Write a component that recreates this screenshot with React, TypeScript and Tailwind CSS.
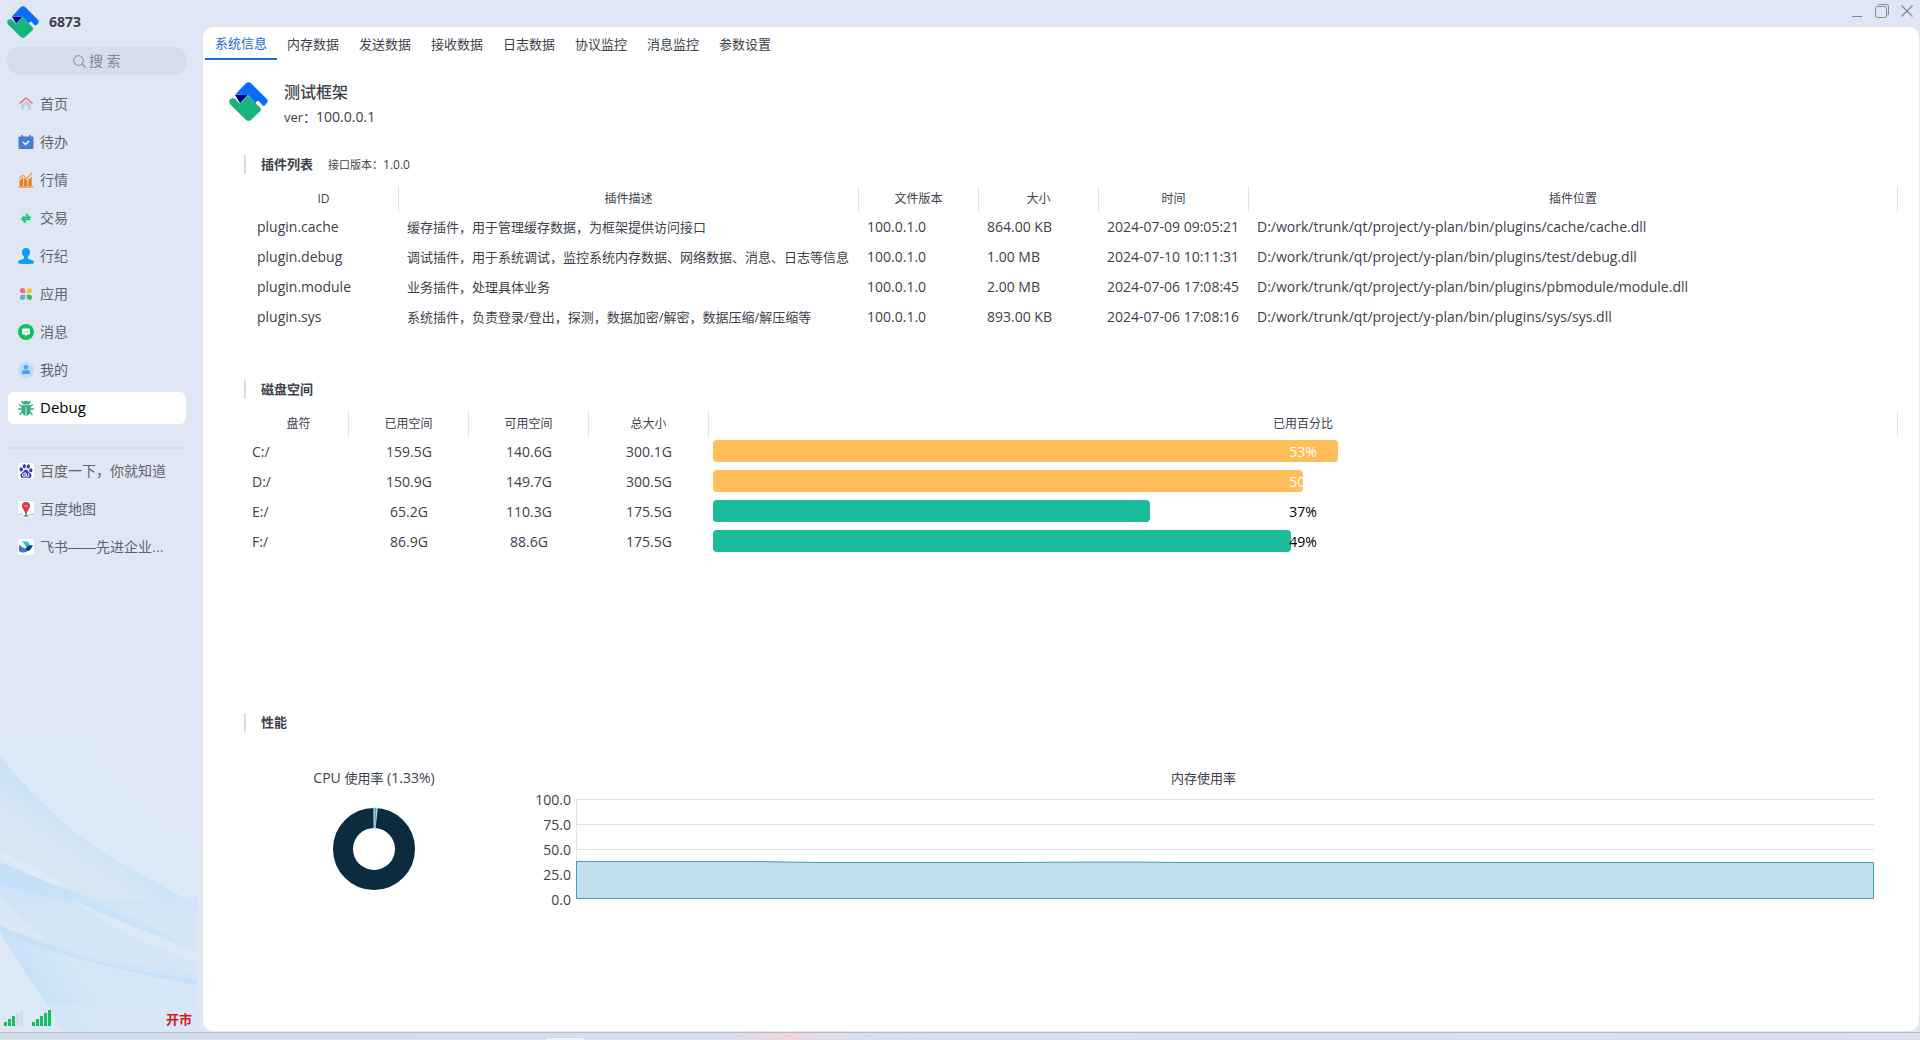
import { ReactNode, useState } from 'react';
import clsx from 'clsx';
import { SiBaidu } from 'react-icons/si';

interface Plugin {
  id: string;
  description: string;
  version: string;
  size: string;
  time: string;
  path: string;
}

interface Disk {
  name: string;
  used: string;
  free: string;
  total: string;
  percent: number;
}

const tabs = ['系统信息', '内存数据', '发送数据', '接收数据', '日志数据', '协议监控', '消息监控', '参数设置'];

const plugins: Plugin[] = [
  {
    id: 'plugin.cache',
    description: '缓存插件，用于管理缓存数据，为框架提供访问接口',
    version: '100.0.1.0',
    size: '864.00 KB',
    time: '2024-07-09 09:05:21',
    path: 'D:/work/trunk/qt/project/y-plan/bin/plugins/cache/cache.dll',
  },
  {
    id: 'plugin.debug',
    description: '调试插件，用于系统调试，监控系统内存数据、网络数据、消息、日志等信息',
    version: '100.0.1.0',
    size: '1.00 MB',
    time: '2024-07-10 10:11:31',
    path: 'D:/work/trunk/qt/project/y-plan/bin/plugins/test/debug.dll',
  },
  {
    id: 'plugin.module',
    description: '业务插件，处理具体业务',
    version: '100.0.1.0',
    size: '2.00 MB',
    time: '2024-07-06 17:08:45',
    path: 'D:/work/trunk/qt/project/y-plan/bin/plugins/pbmodule/module.dll',
  },
  {
    id: 'plugin.sys',
    description: '系统插件，负责登录/登出，探测，数据加密/解密，数据压缩/解压缩等',
    version: '100.0.1.0',
    size: '893.00 KB',
    time: '2024-07-06 17:08:16',
    path: 'D:/work/trunk/qt/project/y-plan/bin/plugins/sys/sys.dll',
  },
];

const disks: Disk[] = [
  { name: 'C:/', used: '159.5G', free: '140.6G', total: '300.1G', percent: 53 },
  { name: 'D:/', used: '150.9G', free: '149.7G', total: '300.5G', percent: 50 },
  { name: 'E:/', used: '65.2G', free: '110.3G', total: '175.5G', percent: 37 },
  { name: 'F:/', used: '86.9G', free: '88.6G', total: '175.5G', percent: 49 },
];

function Logo({ className }: { className: string }) {
  return (
    <svg viewBox="0 0 116 116" className={className} aria-hidden="true">
      <path
        d="M18 38 50 4q8-7 16 0l46 46q6 6 1 12l-4 6q-6 5-11 0L88 56q-8 0-8 8L56 39z"
        fill="#0b6cf8"
      />
      <path d="M18 39h38L33 63z" fill="#00008c" />
      <path
        d="M3 52q8-8 15-2l11 12q3 3 7 0l20-22 36 36q6 6 0 12L66 112q-8 7-16 0L4 67q-6-7-1-15z"
        fill="#17b47e"
      />
    </svg>
  );
}

function HomeIcon() {
  return (
    <svg viewBox="0 0 16 16" className="size-4">
      <path d="M3 8.500 8 4.500l5 4V14h-3v-3.500a2 2 0 0 0-4 0V14H3z" fill="#c3cfdc" />
      <path d="M1.500 7.500 8 2l6.500 5.500" fill="none" stroke="#e8636a" strokeWidth="1.300" />
    </svg>
  );
}

function TodoIcon() {
  return (
    <svg viewBox="0 0 16 16" className="size-4">
      <rect x=".5" y="2.500" width="15" height="12.500" rx="1" fill="#4a7bd0" />
      <path d="M4 1v3M12 1v3" stroke="#4a7bd0" strokeWidth="1.600" />
      <path d="m5 8 2.500 2.500L11 7" fill="none" stroke="#fff" strokeWidth="1.500" />
    </svg>
  );
}

function MarketIcon() {
  return (
    <svg viewBox="0 0 16 16" className="size-4">
      <path d="M1.500 8.500 5 5.500V14H1.500zM5.800 5.500 9.500 9v5H5.800zM10.300 8l3.400-3.500V14h-3.400z" fill="#f27a1a" />
      <path d="M1 6.500 5 3l4 3.500L14 1M.5 15h15" fill="none" stroke="#f59a4f" strokeWidth="1.300" />
    </svg>
  );
}

function TradeIcon() {
  return (
    <svg viewBox="0 0 16 16" className="size-4">
      <circle cx="8" cy="8" r="7" fill="#c5f1de" />
      <path d="M4 7.300h7.500L8 4M12 9.300H4.500L8 12.500" fill="none" stroke="#1fb784" strokeWidth="1.700" />
    </svg>
  );
}

function PersonIcon() {
  return (
    <svg viewBox="0 0 16 16" className="size-4">
      <path
        d="M8 0c2.600 0 4 1.800 4 4.300 0 1.900-.9 3.500-2 4.500v1.400c0 1.300 6 1.300 6 4.300 0 1-2 1.500-8 1.500s-8-.5-8-1.500c0-3 6-3 6-4.300V8.800C4.900 7.800 4 6.200 4 4.300 4 1.800 5.400 0 8 0z"
        fill="#0a9ff5"
      />
    </svg>
  );
}

function AppsIcon() {
  return (
    <svg viewBox="0 0 16 16" className="size-4">
      <path d="M4.500 2a2.700 2.700 0 0 1 2.700 2.700v2.500H4.500a2.600 2.600 0 0 1 0-5.200z" fill="#f0717a" />
      <path d="M11.500 2a2.600 2.600 0 0 1 0 5.200H8.800V4.700A2.700 2.700 0 0 1 11.500 2z" fill="#fbc531" />
      <path d="M4.500 8.800h2.700v2.700a2.600 2.600 0 1 1-2.700-2.700z" fill="#6ea4f8" />
      <path d="M8.800 8.800h2.700a2.600 2.600 0 1 1-2.700 2.700z" fill="#2ec45a" />
    </svg>
  );
}

function MessageIcon() {
  return (
    <svg viewBox="0 0 16 16" className="size-4">
      <circle cx="8" cy="8" r="8" fill="#0fc25b" />
      <path d="M5 4.500h6a1 1 0 0 1 1 1v4a1 1 0 0 1-1 1H9.500L8 12l-1.500-1.500H5a1 1 0 0 1-1-1v-4a1 1 0 0 1 1-1z" fill="#fff" />
      <path d="M6 7.800h4" stroke="#7ddba5" strokeWidth="1" />
    </svg>
  );
}

function MineIcon() {
  return (
    <svg viewBox="0 0 16 16" className="size-4">
      <circle cx="8" cy="8" r="8" fill="#bfdcfb" />
      <circle cx="8" cy="5.200" r="2.200" fill="#4f9ff5" />
      <path d="M4 12V9.800Q4 8.200 5.600 8.200h4.800Q12 8.200 12 9.800V12z" fill="#4f9ff5" />
    </svg>
  );
}

function BugIcon() {
  return (
    <svg viewBox="0 0 16 16" className="size-4">
      <path
        d="M5 3 3.500 1M11 3l1.500-2M4 6.500 1 4.500M12 6.500l3-2M4 9H0M12 9h4M4 12l-2.500 3M12 12l2.500 3"
        stroke="#2fae84"
        strokeWidth="1.300"
      />
      <path d="M4.500 4.500C4.500 2 6 .8 8 .8s3.500 1.200 3.500 3.700z" fill="#2fae84" />
      <path d="M3.500 5.300h9V10c0 3.500-2 5.500-4.500 5.500S3.500 13.500 3.500 10z" fill="#2fae84" />
      <path d="M8 7v8" stroke="#b9e6d6" strokeWidth="1.200" />
    </svg>
  );
}

function BaiduIcon() {
  return (
    <span className="flex size-4 items-center justify-center rounded-xs bg-white">
      <SiBaidu className="size-3.5 text-[#2f36c9]" />
    </span>
  );
}

function MapIcon() {
  return (
    <svg viewBox="0 0 16 16" className="size-4">
      <rect width="16" height="16" rx="2" fill="#fff" />
      <path d="M0 13l4-2 2 4H1q-1 0-1-1z" fill="#cfe6f3" />
      <path d="m16 12-5 1-1 2h5q1 0 1-1z" fill="#cfe9b5" />
      <path d="M5 15.500 8 13l3 2.500z" fill="#3f7fd0" />
      <path d="M8 1a4 4 0 0 1 4 4c0 2.500-2.500 4-3.300 8H7.300C6.500 9 4 7.500 4 5a4 4 0 0 1 4-4z" fill="#e0373f" />
      <path d="M6.500 5h3" stroke="#f6a5a8" strokeWidth="1.500" />
    </svg>
  );
}

function FeishuIcon() {
  return (
    <svg viewBox="0 0 16 16" className="size-4">
      <rect width="16" height="16" rx="2" fill="#fff" />
      <path d="M3.500 2.500h6c1.200 1.200 2 2.600 2.300 4.200L8.700 9C7.500 6.300 5.700 4.200 3.500 2.500z" fill="#1cc9b4" />
      <path d="M1 5.500c3 3 6.500 4.800 10 4.500C9.500 13 7 13.700 4.500 13.500 2.500 13.300 1 12.500 1 11.500z" fill="#3673f0" />
      <path d="M7.500 9.500C9.500 6.500 12 5.500 15 6.500c-1.500 1.500-1.800 4.500-5 5.500-1 .3-2-1-2.500-2.500z" fill="#123a8c" />
    </svg>
  );
}

const navItems: { label: string; icon: ReactNode }[] = [
  { label: '首页', icon: <HomeIcon /> },
  { label: '待办', icon: <TodoIcon /> },
  { label: '行情', icon: <MarketIcon /> },
  { label: '交易', icon: <TradeIcon /> },
  { label: '行纪', icon: <PersonIcon /> },
  { label: '应用', icon: <AppsIcon /> },
  { label: '消息', icon: <MessageIcon /> },
  { label: '我的', icon: <MineIcon /> },
  { label: 'Debug', icon: <BugIcon /> },
];

const links: { label: string; icon: ReactNode }[] = [
  { label: '百度一下，你就知道', icon: <BaiduIcon /> },
  { label: '百度地图', icon: <MapIcon /> },
  { label: '飞书——先进企业...', icon: <FeishuIcon /> },
];

function SidebarArt() {
  return (
    <svg
      viewBox="0 0 197 452"
      preserveAspectRatio="none"
      className="pointer-events-none absolute bottom-0 left-0 h-[452px] w-[197px]"
      aria-hidden="true"
    >
      <defs>
        <linearGradient id="haze" x1="0" y1="0" x2="0" y2="1">
          <stop offset="0" stopColor="#dce8f6" stopOpacity="0" />
          <stop offset=".4" stopColor="#dde8f6" />
          <stop offset="1" stopColor="#dce8f6" />
        </linearGradient>
        <linearGradient id="veil" gradientUnits="userSpaceOnUse" x1="98" y1="262" x2="62" y2="316">
          <stop offset="0" stopColor="#cbe2f6" />
          <stop offset=".3" stopColor="#d6e5f4" />
          <stop offset="1" stopColor="#dfe6f3" />
        </linearGradient>
        <linearGradient id="wave" gradientUnits="userSpaceOnUse" x1="0" y1="290" x2="0" y2="452">
          <stop offset="0" stopColor="#cce3f7" />
          <stop offset=".35" stopColor="#d4e5f5" />
          <stop offset="1" stopColor="#d6e6f5" />
        </linearGradient>
        <linearGradient id="ribbon" x1="0" y1="0" x2="1" y2="0">
          <stop offset="0" stopColor="#c4e0f8" />
          <stop offset=".45" stopColor="#c6e1f8" />
          <stop offset="1" stopColor="#d0e4f6" />
        </linearGradient>
        <linearGradient id="fold" gradientUnits="userSpaceOnUse" x1="30" y1="402" x2="70" y2="378">
          <stop offset="0" stopColor="#c6e1f8" />
          <stop offset="1" stopColor="#d5e6f6" />
        </linearGradient>
      </defs>
      <path d="M0 0Q70 170 197 262V452H0z" fill="url(#haze)" />
      <path d="M0 176Q60 252 133 290T197 332V370L80 325 0 285z" fill="url(#veil)" />
      <path d="M0 252Q60 275 115 318L80 315Q30 300 0 270z" fill="#d8e6f4" />
      <path d="M0 282Q50 320 130 319L197 317V452H0z" fill="url(#wave)" />
      <path d="M0 282Q33 297 77 313 110 326 197 370 130 350 77 322 30 316 0 304z" fill="url(#ribbon)" />
      <path d="M0 272Q40 288 70 309 30 298 0 276z" fill="#e0eaf6" />
      <path d="M68 318Q130 346 197 372V382Q130 360 68 318z" fill="#dbe8f6" />
      <path d="M0 315Q25 345 48 360L0 348z" fill="#dae7f5" />
      <path d="M0 345Q35 392 67 425L67 452H0z" fill="#dde8f5" />
      <path d="M0 345Q60 375 197 402V452H65Q30 402 0 352z" fill="url(#fold)" />
      <path d="M0 346Q60 375 197 400V405Q70 382 0 352z" fill="#c6e1f7" />
      <path d="M20 353Q90 382 197 392V398Q100 390 20 353z" fill="#cfe4f6" />
      <path d="M0 425H197V452H0z" fill="#dce7f4" opacity=".5" />
    </svg>
  );
}

function Signal({ level }: { level: number }) {
  return (
    <svg viewBox="0 0 19 16" className="h-4 w-[19px]" aria-hidden="true">
      {[4, 7, 10, 13, 16].map((height, index) => (
        <rect
          key={height}
          x={index * 4}
          y={16 - height}
          width="3"
          height={height}
          fill={index < level ? '#17bf5c' : '#cfdbe7'}
        />
      ))}
    </svg>
  );
}

function Sidebar() {
  const [current, setCurrent] = useState('Debug');

  return (
    <aside className="relative flex w-[203px] shrink-0 flex-col">
      <SidebarArt />

      <div className="relative flex flex-1 flex-col">
        <div className="flex items-center gap-2.5 px-[7px] pt-1.5">
          <Logo className="size-8" />
          <span className="text-sm font-bold">6873</span>
        </div>

        <label className="mt-[9px] mr-4 ml-[7px] flex h-7 items-center justify-center gap-[3px] rounded-full bg-[#d4dde8]">
          <svg viewBox="0 0 13 13" className="size-[13px]" aria-hidden="true">
            <circle cx="5.500" cy="5.500" r="4.800" fill="none" stroke="#8ba0c4" strokeWidth="1.200" />
            <path d="m9 9 3.500 3.500" stroke="#8ba0c4" strokeWidth="1.500" />
          </svg>
          <input
            type="text"
            aria-label="搜索"
            placeholder="搜 索"
            className="w-8 bg-transparent text-sm outline-none placeholder:text-[#808891]"
          />
        </label>

        <nav className="mt-[13px] mr-[17px] ml-2 flex flex-col gap-1.5">
          {navItems.map(({ label, icon }) => (
            <button
              key={label}
              type="button"
              onClick={() => setCurrent(label)}
              className={clsx(
                'flex h-8 items-center gap-1.5 rounded-md px-2.5 text-sm',
                current === label ? 'bg-white text-[15px] text-black' : 'text-[#5f646c]',
              )}
            >
              {icon}
              {label}
            </button>
          ))}
        </nav>

        <div className="mt-[23px] mr-[17px] ml-2 flex flex-col gap-1.5 border-t-2 border-[#d3deea] pt-1.5">
          {links.map(({ label, icon }) => (
            <a
              key={label}
              href="#"
              className="flex h-8 items-center gap-1.5 px-2.5 font-['Liberation_Sans','Noto_Sans_CJK_SC',sans-serif] text-sm whitespace-nowrap text-[#5f646c]"
            >
              {icon}
              {label}
            </a>
          ))}
        </div>

        <div className="mt-auto flex h-7 items-center gap-[9px] pr-[11px] pl-1">
          <Signal level={3} />
          <Signal level={5} />
          <span className="ml-auto pt-1 text-[13px] font-bold text-[#d8181c]">开市</span>
        </div>
      </div>
    </aside>
  );
}

function WindowControls() {
  return (
    <div className="flex h-[27px] items-start justify-end gap-[11px] pt-1 pr-[5px] text-[#85888d]">
      <button type="button" aria-label="最小化">
        <svg viewBox="0 0 14 14" className="size-3.5">
          <path d="M2 12.500h10" stroke="currentColor" />
        </svg>
      </button>
      <button type="button" aria-label="还原">
        <svg viewBox="0 0 14 14" className="size-3.5" fill="none" stroke="currentColor">
          <rect x=".5" y="2.500" width="11" height="11" rx="2" />
          <path d="M3 2V1.500q0-1 1-1h7.500q2 0 2 2V10q0 1-1 1H12" />
        </svg>
      </button>
      <button type="button" aria-label="关闭">
        <svg viewBox="0 0 14 14" className="size-3.5">
          <path d="m1.500 1.500 11 11m0-11-11 11" stroke="currentColor" strokeWidth="1.200" />
        </svg>
      </button>
    </div>
  );
}

function SectionTitle({ title, children }: { title: string; children?: ReactNode }) {
  return (
    <div className="ml-[41px] flex h-[19px] items-center border-l-2 border-[#d2ddea] pt-px pl-[15px]">
      <h2 className="text-[13px] font-bold">{title}</h2>
      {children}
    </div>
  );
}

function HeaderCell({ children }: { children: ReactNode }) {
  return (
    <th className="h-[26px] border-r border-[#e2e4e8] p-0 text-center text-xs font-normal">{children}</th>
  );
}

function PluginTable() {
  return (
    <table className="w-full table-fixed border-separate border-spacing-0 text-sm whitespace-nowrap">
      <colgroup>
        <col className="w-[150px]" />
        <col className="w-[460px]" />
        <col className="w-[120px]" />
        <col className="w-[120px]" />
        <col className="w-[150px]" />
        <col />
      </colgroup>
      <thead>
        <tr>
          <HeaderCell>ID</HeaderCell>
          <HeaderCell>插件描述</HeaderCell>
          <HeaderCell>文件版本</HeaderCell>
          <HeaderCell>大小</HeaderCell>
          <HeaderCell>时间</HeaderCell>
          <HeaderCell>插件位置</HeaderCell>
        </tr>
      </thead>
      <tbody>
        {plugins.map((plugin) => (
          <tr key={plugin.id} className="h-[30px]">
            <td className="pl-2">{plugin.id}</td>
            <td className="pl-2 text-[13px]">{plugin.description}</td>
            <td className="pl-2">{plugin.version}</td>
            <td className="pl-2">{plugin.size}</td>
            <td className="pl-2">{plugin.time}</td>
            <td className="pl-2">{plugin.path}</td>
          </tr>
        ))}
      </tbody>
    </table>
  );
}

function UsageBar({ percent }: { percent: number }) {
  const isHigh = percent >= 50;

  return (
    <div className="relative h-[22px]">
      <div
        className={clsx('h-full rounded-sm', isHigh ? 'bg-[#ffbe5a]' : 'bg-[#1abc9c]')}
        style={{ width: `${percent}%` }}
      />
      <span
        className={clsx(
          'absolute inset-0 flex items-center justify-center pt-0.5',
          isHigh ? 'text-white' : 'text-black',
        )}
      >
        {percent}%
      </span>
    </div>
  );
}

function DiskTable() {
  return (
    <table className="w-full table-fixed border-separate border-spacing-0 text-sm whitespace-nowrap">
      <colgroup>
        <col className="w-[100px]" />
        <col className="w-[120px]" />
        <col className="w-[120px]" />
        <col className="w-[120px]" />
        <col />
      </colgroup>
      <thead>
        <tr>
          <HeaderCell>盘符</HeaderCell>
          <HeaderCell>已用空间</HeaderCell>
          <HeaderCell>可用空间</HeaderCell>
          <HeaderCell>总大小</HeaderCell>
          <HeaderCell>已用百分比</HeaderCell>
        </tr>
      </thead>
      <tbody>
        {disks.map((disk) => (
          <tr key={disk.name} className="h-[30px]">
            <td className="pl-[3px]">{disk.name}</td>
            <td className="text-center">{disk.used}</td>
            <td className="text-center">{disk.free}</td>
            <td className="text-center">{disk.total}</td>
            <td className="pr-[5px] pb-0.5 pl-1">
              <UsageBar percent={disk.percent} />
            </td>
          </tr>
        ))}
      </tbody>
    </table>
  );
}

function CpuChart() {
  return (
    <div className="flex w-[250px] flex-col items-center">
      <h3 className="text-sm">
        CPU <span className="text-[13px]">使用率</span> (1.33%)
      </h3>
      <svg viewBox="0 0 84 84" className="mt-[19px] size-[84px]" aria-hidden="true">
        <circle cx="42" cy="42" r="31" fill="none" stroke="#0a2c3e" strokeWidth="20" />
        <path d="M41.500 0v22h2L45.800 0z" fill="#d5ecf5" />
        <path d="M42.500 1v20h.8L44.500 1z" fill="#4ba3c7" />
      </svg>
    </div>
  );
}

function MemoryChart() {
  return (
    <div className="min-w-0 flex-1">
      <h3 className="text-center text-[13px] leading-5">内存使用率</h3>
      <div className="mt-0.5 flex gap-[5px] pr-6">
        <div className="flex w-[62px] flex-col items-end gap-[5px] text-sm">
          {['100.0', '75.0', '50.0', '25.0', '0.0'].map((label) => (
            <span key={label}>{label}</span>
          ))}
        </div>
        <svg
          viewBox="0 0 1298 100"
          preserveAspectRatio="none"
          className="mt-[9px] h-[100px] min-w-0 flex-1"
          aria-hidden="true"
        >
          <path d="M0 .5h1298M0 25.500h1298M0 50.500h1298M.5 0v100" stroke="#e1e3e5" />
          <path
            d="M.5 99.500V62.500H180L240 63.500H440L520 63H560L600 63.500H1297.500V99.500z"
            fill="#bfdfef"
            stroke="#3f9cc0"
          />
        </svg>
      </div>
    </div>
  );
}

export default function App() {
  const [activeTab, setActiveTab] = useState(tabs[0]);

  return (
    <div className="flex min-h-screen flex-col bg-[#e0e7f4] font-['Open_Sans','Noto_Sans_CJK_SC',sans-serif] text-[#3c414b]">
      <div className="flex flex-1">
        <Sidebar />

        <div className="flex min-w-0 flex-1 flex-col pr-px">
          <WindowControls />

          <main className="mb-px flex-1 rounded-[10px] bg-white">
            <div role="tablist" className="flex h-[33px] pl-0.5">
              {tabs.map((tab) => (
                <button
                  key={tab}
                  type="button"
                  role="tab"
                  aria-selected={activeTab === tab}
                  onClick={() => setActiveTab(tab)}
                  className={clsx(
                    'border-b-2 px-2.5 text-[13px]',
                    activeTab === tab ? 'border-[#1b6bd6] pt-0.5 text-[#1b6bd6]' : 'border-transparent pt-1',
                  )}
                >
                  {tab}
                </button>
              ))}
            </div>

            <div className="mt-[22px] ml-[26px] flex gap-4">
              <Logo className="size-[39px]" />
              <div>
                <h1 className="text-base leading-5 font-medium">测试框架</h1>
                <p className="mt-[5px] text-sm">
                  <span className="text-[13px]">ver：</span>100.0.0.1
                </p>
              </div>
            </div>

            <section className="mt-7 mb-12">
              <SectionTitle title="插件列表">
                <span className="ml-[15px] text-[11px]">
                  接口版本：<span className="text-xs">1.0.0</span>
                </span>
              </SectionTitle>
              <div className="mt-3 mr-[21px] ml-[46px]">
                <PluginTable />
              </div>
            </section>

            <section className="mb-[156px]">
              <SectionTitle title="磁盘空间" />
              <div className="mt-3 mr-[21px] ml-[46px]">
                <DiskTable />
              </div>
            </section>

            <section>
              <SectionTitle title="性能" />
              <div className="mt-9 mr-[21px] ml-[46px] flex gap-2.5">
                <CpuChart />
                <MemoryChart />
              </div>
            </section>
          </main>
        </div>
      </div>

      <footer className="flex h-2 border-t border-[#b4bdca] bg-linear-to-r from-[#d3dcea] via-[#d7e1ed] to-[#dcdfec]">
        <div className="mt-[5px] ml-[546px] w-[38px] rounded-t-sm bg-[#eef1f7]" />
        <div className="ml-[142px] w-[120px] bg-linear-to-r from-[#dcdcec] via-[#f0d6dc] to-[#dde0ec]" />
      </footer>
    </div>
  );
}
